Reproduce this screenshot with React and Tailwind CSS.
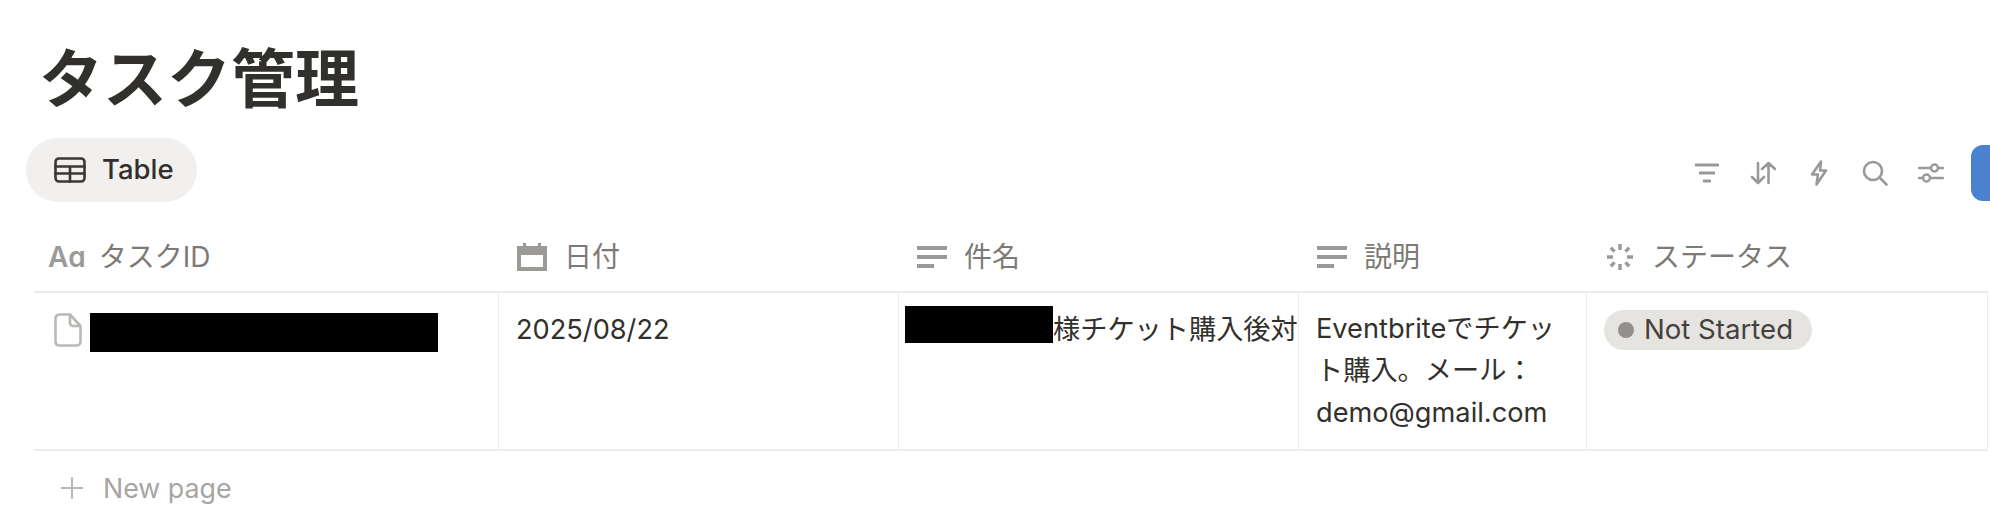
const FONT = { fontFamily: 'Inter, "Noto Sans CJK JP", sans-serif' };

const stroke = { fill: 'none', stroke: 'currentColor', strokeLinecap: 'round', strokeLinejoin: 'round' };

function TableIcon() {
  return (
    <svg width="32" height="26" viewBox="0 0 32 26" className="text-[#3a3835]" {...stroke} strokeWidth="2.6">
      <rect x="1.5" y="1.5" width="29" height="23" rx="3.5" />
      <path d="M1.5 9.5H30.5M1.5 16.5H30.5M16 9.5V24.5" />
    </svg>
  );
}
function FilterIcon() {
  return (
    <svg width="26" height="20" viewBox="0 0 26 20" {...stroke} strokeLinecap="butt" strokeWidth="2.8">
      <path d="M1 2H25M5 10H21M9 18H17" />
    </svg>
  );
}
function SortIcon() {
  return (
    <svg width="26" height="24" viewBox="0 0 26 24" {...stroke} strokeWidth="2.6">
      <path d="M8 2V22M2 16L8 22L14 16M18.5 22V2M12 8L18.5 2L25 8" />
    </svg>
  );
}
function BoltIcon() {
  return (
    <svg width="18" height="26" viewBox="0 0 18 26" {...stroke} strokeWidth="2.6">
      <path d="M11 1.5L2 14.5H8L6.5 24.5L16 10.5H10Z" />
    </svg>
  );
}
function SearchIcon() {
  return (
    <svg width="26" height="26" viewBox="0 0 26 26" {...stroke} strokeWidth="2.6">
      <circle cx="11" cy="11" r="9" />
      <path d="M17.5 17.5L24.5 24.5" />
    </svg>
  );
}
function SlidersIcon() {
  return (
    <svg width="26" height="22" viewBox="0 0 26 22" {...stroke} strokeWidth="2.4">
      <path d="M1 6H13M20 6H25M1 16H5M12 16H25" />
      <circle cx="16.5" cy="6" r="3.5" />
      <circle cx="8.5" cy="16" r="3.5" />
    </svg>
  );
}
function CalendarIcon() {
  return (
    <svg width="30" height="28" viewBox="0 0 30 28">
      <path fillRule="evenodd" fill="#9b9a97" d="M0 3H6V0H9V3H21V0H24V3H30V28H0ZM4 12V24H26V12Z" />
    </svg>
  );
}
function LinesIcon() {
  return (
    <svg width="30" height="24" viewBox="0 0 30 24" fill="#9b9a97">
      <rect x="0" y="1" width="30" height="4" />
      <rect x="0" y="10" width="30" height="4" />
      <rect x="0" y="19" width="17" height="4" />
    </svg>
  );
}
function StatusIcon() {
  return (
    <svg width="28" height="28" viewBox="0 0 28 28" fill="none" stroke="#9b9a97" strokeWidth="3.4">
      <path d="M14 1V7M14 21V27M1 14H7M21 14H27M4.8 4.8L8.6 8.6M19.4 19.4L23.2 23.2M4.8 23.2L8.6 19.4M19.4 8.6L23.2 4.8" />
    </svg>
  );
}
function DocIcon() {
  return (
    <svg width="28" height="34" viewBox="0 0 28 34" fill="none" stroke="#b9b8b5" strokeWidth="2.6" strokeLinejoin="round">
      <path d="M5 1.5H16L26.5 13V28.5A4 4 0 0 1 22.5 32.5H5A4 4 0 0 1 1.5 28.5V5A4 4 0 0 1 5 1.5Z" />
      <path d="M16 1.5V10A3 3 0 0 0 19 13H26.5" />
    </svg>
  );
}

function Head({ width, icon, gap, pad, label }) {
  return (
    <div className={`flex h-full items-center pt-[4px] shrink-0 ${width} ${pad} ${gap}`}>
      <span className="flex items-center shrink-0">{icon}</span>
      <span className="text-[28px] leading-none text-[#7d7a75] whitespace-nowrap">{label}</span>
    </div>
  );
}

function ToolButton({ children }) {
  return <span className="flex items-center justify-center w-[56px]">{children}</span>;
}

export default function App() {
  return (
    <div className="w-[1990px] h-[518px] overflow-hidden bg-white text-[#32302c]" style={FONT}>
      <h1 className="pl-[39px] pt-[40px] h-[138px] text-[64px] leading-[78px] font-bold text-[#32302c]">タスク管理</h1>

      <div className="flex items-center h-[64px] pl-[26px]">
        <div className="flex items-center gap-[16px] h-[64px] w-[171px] pl-[28px] rounded-[32px] bg-[#f1f0ee]">
          <TableIcon />
          <span className="text-[27.5px] font-medium leading-none text-[#32302c]">Table</span>
        </div>
        <div className="ml-auto mt-[5px] flex items-center text-[#9a9996]">
          <ToolButton><FilterIcon /></ToolButton>
          <ToolButton><SortIcon /></ToolButton>
          <ToolButton><BoltIcon /></ToolButton>
          <ToolButton><SearchIcon /></ToolButton>
          <ToolButton><SlidersIcon /></ToolButton>
        </div>
        <div className="ml-[12px] mr-[-70px] mt-[5px] flex items-center shrink-0 h-[56px] w-[89px] pl-[18px] rounded-[12px] bg-[#4a82d0] text-white text-[26px] font-medium">
          New
        </div>
      </div>

      <div className="ml-[34px] w-[1954px] mt-[17px]">
        <div className="flex h-[74px] border-b-2 border-[#ebebea]">
          <Head width="w-[465px]" pad="pl-[14px]" gap="gap-[13px]" icon={<span className="text-[28px] font-semibold leading-none text-[#9b9a97]">Aɑ</span>} label="タスクID" />
          <Head width="w-[400px]" pad="pl-[18px]" gap="gap-[17px]" icon={<CalendarIcon />} label="日付" />
          <Head width="w-[400px]" pad="pl-[18px]" gap="gap-[17px]" icon={<LinesIcon />} label="件名" />
          <Head width="w-[288px]" pad="pl-[18px]" gap="gap-[17px]" icon={<LinesIcon />} label="説明" />
          <Head width="w-[401px]" pad="pl-[19px]" gap="gap-[18px]" icon={<StatusIcon />} label="ステータス" />
        </div>

        <div className="flex h-[158px] border-b-2 border-[#ededeb] text-[27.2px]">
          <div className="w-[465px] shrink-0 flex items-start gap-[8px] pl-[20px] pt-[20px] border-r border-[#ededeb]">
            <DocIcon />
            <div className="w-[348px] h-[39px] bg-black" />
          </div>
          <div className="w-[400px] shrink-0 pl-[17px] pt-[17px] leading-[40px] border-r border-[#ededeb]">2025/08/22</div>
          <div className="w-[400px] shrink-0 overflow-hidden flex items-start pl-[6px] pt-[13px] border-r border-[#ededeb]">
            <div className="w-[148px] h-[37px] shrink-0 bg-black" />
            <span className="whitespace-nowrap leading-[40px] mt-[4px]">様チケット購入後対</span>
          </div>
          <div className="w-[288px] shrink-0 pl-[17px] pr-[20px] pt-[15px] leading-[42px] border-r border-[#ededeb]">
            Eventbriteでチケット購入。メール：demo@gmail.com
          </div>
          <div className="w-[401px] shrink-0 pl-[17px] pt-[16px] border-r border-[#ededeb]">
            <div className="inline-flex items-center gap-[10px] h-[40px] pl-[14px] pr-[19px] rounded-[20px] bg-[#e5e4e0] text-[#44423e] text-[27.6px]">
              <span className="w-[16px] h-[16px] rounded-full bg-[#91908a]" />
              <span className="leading-none">Not Started</span>
            </div>
          </div>
        </div>

        <div className="flex items-center gap-[20px] pl-[27px] pt-[24px] text-[#a6a5a1]">
          <svg width="22" height="22" viewBox="0 0 22 22" fill="none" stroke="#b9b8b5" strokeWidth="2">
            <path d="M11 0V22M0 11H22" />
          </svg>
          <span className="text-[26.8px] leading-none">New page</span>
        </div>
      </div>
    </div>
  );
}
